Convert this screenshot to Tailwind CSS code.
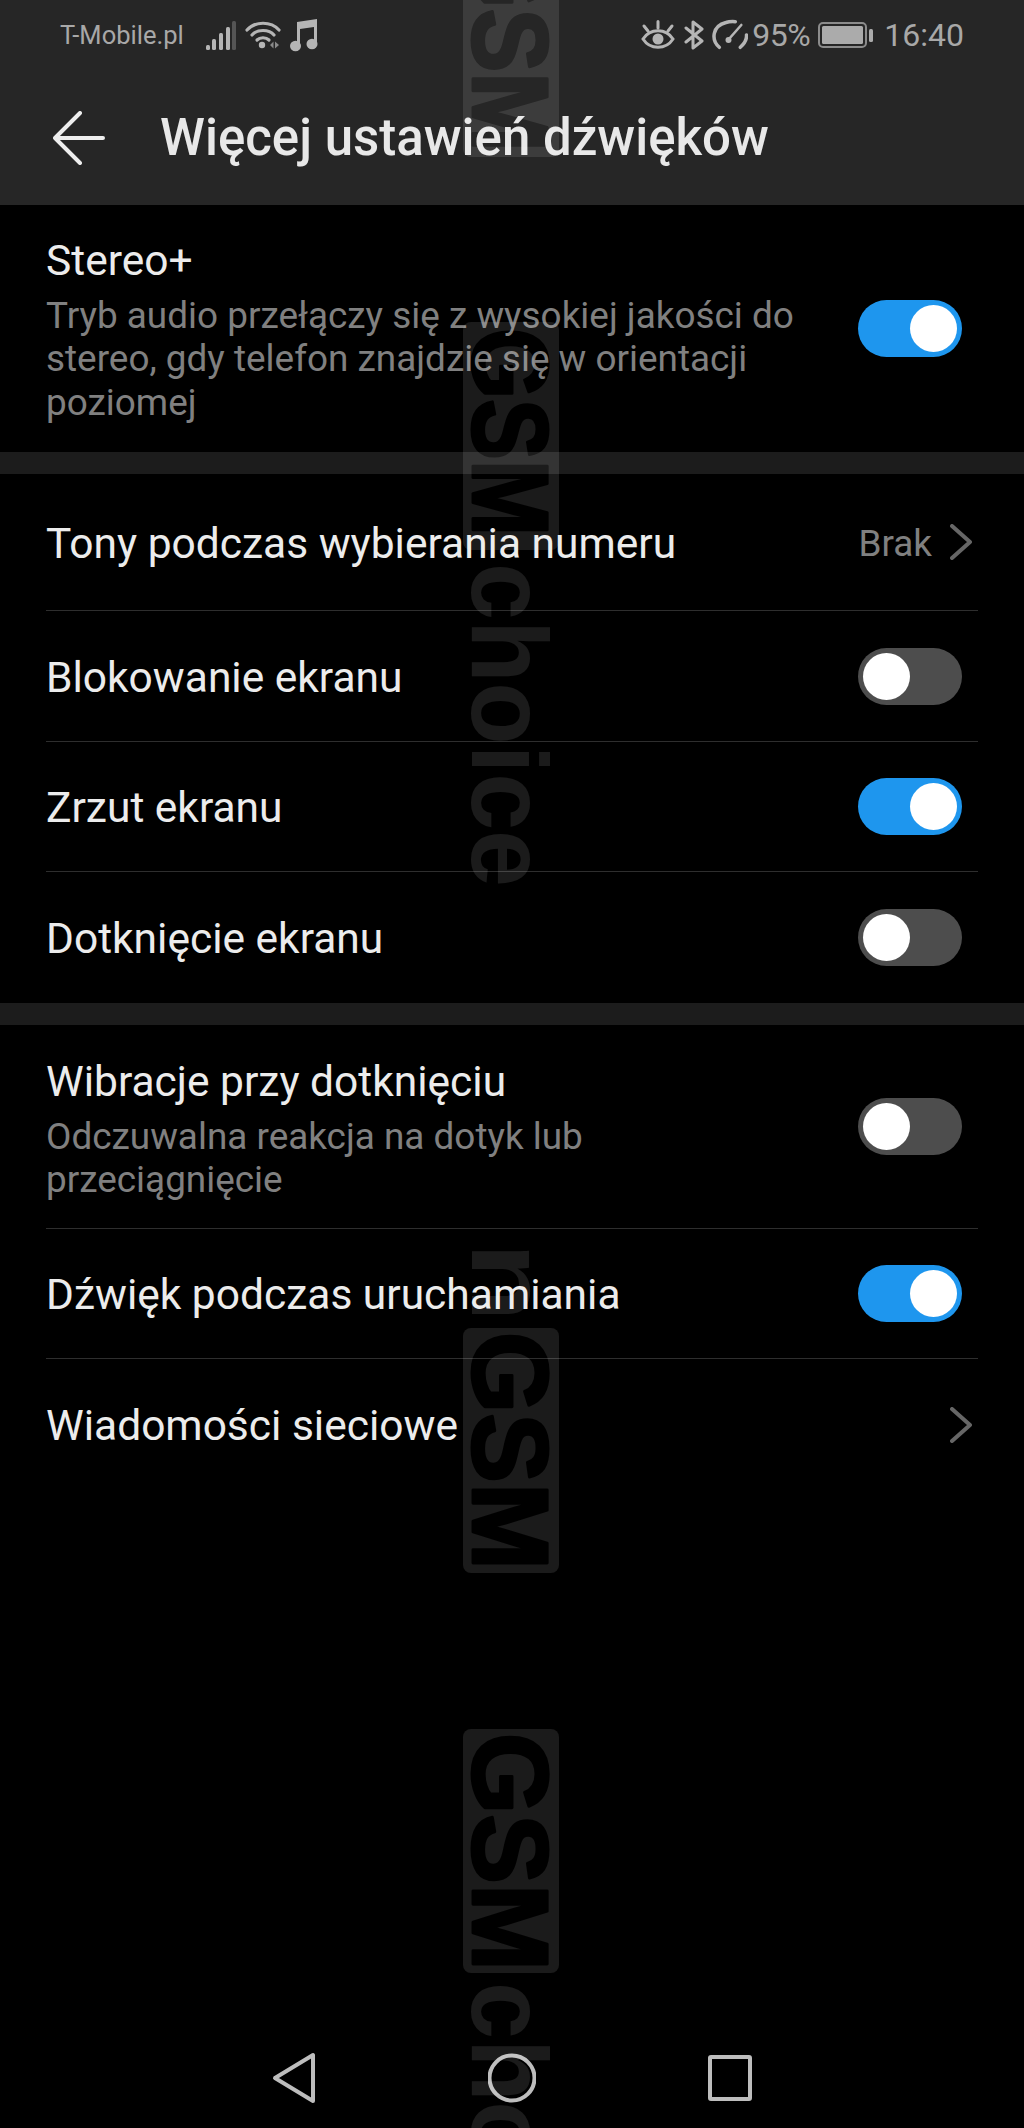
<!DOCTYPE html>
<html lang="pl">
<head>
  <meta charset="UTF-8" />
  <meta name="viewport" content="width=device-width, initial-scale=1.0"/>
  <title>Więcej ustawień dźwięków</title>
  <script src="https://cdn.jsdelivr.net/npm/@tailwindcss/browser@4"></script>
</head>
<body class="relative flex flex-col w-[1024px] h-[2128px] overflow-hidden bg-black font-['Roboto',sans-serif] text-[#ececec]">

  <!-- header -->
  <header class="bg-[#262626] h-[205px] shrink-0">
    <div class="flex items-center h-[70px] pl-[60px] pr-[60px] text-[#a8a8a8]">
      <span class="text-[25.5px] w-[145px]">T-Mobile.pl</span>
      <svg class="w-[32px] h-[32px]" viewBox="0 0 32 32" fill="#b5b5b5">
        <rect x="1" y="26" width="4" height="5" rx="1.5"/><rect x="7" y="20" width="4" height="11" rx="1.5"/><rect x="14" y="14" width="4" height="17" rx="1.5"/><rect x="21" y="8" width="4" height="23" rx="1.5"/><rect x="27" y="2" width="4" height="29" rx="1.5" fill="#555555"/>
      </svg>
      <svg class="w-[36px] h-[30px] ml-[8px]" viewBox="0 0 36 30" fill="none" stroke="#b5b5b5" stroke-width="3.2" stroke-linecap="round">
        <path d="M2 10 C10 1 26 1 34 10"/><path d="M7 15 C12 9 24 9 29 15"/><path d="M12 20 C15 17 21 17 24 20"/>
        <circle cx="17" cy="25" r="3.2" fill="#b5b5b5" stroke="none"/>
        <path d="M25 25 l3.5 -3.5 v7z M30 21.5 l4 3.5 -4 3.5z" fill="#8a8a8a" stroke="none"/>
      </svg>
      <svg class="w-[28px] h-[34px] ml-[9px]" viewBox="0 0 28 34" fill="#b5b5b5">
        <path d="M7 4 L27 1 V27 H24 V9 L10 11 V29 H7z"/><ellipse cx="5.5" cy="28" rx="5.5" ry="5.2"/><ellipse cx="22" cy="26" rx="5.5" ry="5.2"/>
      </svg>
      <div class="flex-1"></div>
      <svg class="w-[34px] h-[30px]" viewBox="0 0 34 30" fill="none" stroke="#b5b5b5" stroke-width="3" stroke-linecap="round">
        <path d="M2 19 C9 8 25 8 32 19 C25 30 9 30 2 19z"/><circle cx="17" cy="19" r="5.5" fill="#b5b5b5" stroke="none"/>
        <path d="M3 6 L7 11 M17 1.5 V8 M31 6 L27 11"/>
      </svg>
      <svg class="w-[20px] h-[30px] ml-[9px]" viewBox="0 0 20 30" fill="none" stroke="#b5b5b5" stroke-width="3" stroke-linecap="round" stroke-linejoin="round">
        <path d="M2 8 L18 21 L9 28 V2 L18 9 L2 22"/>
      </svg>
      <svg class="w-[36px] h-[34px] ml-[8px]" viewBox="0 0 36 34" fill="none" stroke="#b5b5b5" stroke-width="3.5" stroke-linecap="round">
        <path d="M7.3 29.3 C-1 22 0 8 14 4.5 C17 3.5 20 3.5 23.3 3.7"/><path d="M34.5 17 C35 22 32 26 28.3 29.3"/><path d="M17 21 L29.3 7" stroke-width="2.6"/><circle cx="16.5" cy="22" r="3" fill="#b5b5b5" stroke="none"/>
      </svg>
      <span class="text-[32px] ml-[4px] w-[60px] tracking-[-0.5px]">95%</span>
      <svg class="w-[56px] h-[28px] ml-[6px]" viewBox="0 0 56 28" fill="none">
        <rect x="1" y="2" width="47" height="24" rx="4" stroke="#8c8c8c" stroke-width="2"/><rect x="4" y="5" width="41" height="18" rx="1.5" fill="#ababab"/><rect x="51" y="8" width="4" height="13" rx="1.5" fill="#ababab"/>
      </svg>
      <span class="text-[32px] ml-[10px]">16:40</span>
    </div>
    <div class="flex items-center h-[135px] pl-[53px]">
      <svg class="w-[52px] h-[54px]" viewBox="0 0 52 54" fill="none" stroke="#eeeeee" stroke-width="4" stroke-linecap="round" stroke-linejoin="round">
        <path d="M50 27 H2 M27 2 L2 27 L27 52"/>
      </svg>
      <h1 class="ml-[55px] pt-[2px] text-[51px] font-medium text-[#e8e8e8]">Więcej ustawień dźwięków</h1>
    </div>
  </header>

  <!-- stereo -->
  <section class="pl-[46px] pr-[62px] h-[247px] shrink-0 flex items-center justify-between">
    <div class="w-[755px] mt-[3px]">
      <p class="text-[42.5px] leading-[50px] mb-[8px]">Stereo+</p>
      <p class="text-[36.9px] leading-[43.5px] text-[#808080]">Tryb audio przełączy się z wysokiej jakości do stereo, gdy telefon znajdzie się w orientacji poziomej</p>
    </div>
    <div class="flex justify-end items-center w-[104px] h-[57px] rounded-full bg-[#1e96ee] px-[5px]"><div class="w-[47px] h-[47px] rounded-full bg-white"></div></div>
  </section>
  <div class="h-[22px] shrink-0 bg-[#1c1c1c]"></div>

  <!-- tones -->
  <section class="mx-[46px] shrink-0">
    <div class="flex items-center justify-between h-[137px] border-b border-[#2e2e2e]">
      <span class="text-[42.5px] pt-[3px]">Tony podczas wybierania numeru</span>
      <div class="flex items-center pr-[6px]">
        <span class="text-[36.9px] pt-[3px] text-[#808080]">Brak</span>
        <svg class="w-[22px] h-[36px] ml-[18px]" viewBox="0 0 22 36" fill="none" stroke="#666666" stroke-width="4" stroke-linecap="round" stroke-linejoin="round"><path d="M2 2 L20 18 L2 34"/></svg>
      </div>
    </div>
    <div class="flex items-center justify-between h-[131px] border-b border-[#2e2e2e] pr-[16px]">
      <span class="text-[42.5px] pt-[3px]">Blokowanie ekranu</span>
      <div class="flex items-center w-[104px] h-[57px] rounded-full bg-[#4d4d4d] px-[5px]"><div class="w-[47px] h-[47px] rounded-full bg-white"></div></div>
    </div>
    <div class="flex items-center justify-between h-[130px] border-b border-[#2e2e2e] pr-[16px]">
      <span class="text-[42.5px] pt-[3px]">Zrzut ekranu</span>
      <div class="flex justify-end items-center w-[104px] h-[57px] rounded-full bg-[#1e96ee] px-[5px]"><div class="w-[47px] h-[47px] rounded-full bg-white"></div></div>
    </div>
    <div class="flex items-center justify-between h-[131px] pr-[16px]">
      <span class="text-[42.5px] pt-[3px]">Dotknięcie ekranu</span>
      <div class="flex items-center w-[104px] h-[57px] rounded-full bg-[#4d4d4d] px-[5px]"><div class="w-[47px] h-[47px] rounded-full bg-white"></div></div>
    </div>
  </section>
  <div class="h-[22px] shrink-0 bg-[#1c1c1c]"></div>

  <!-- feedback -->
  <section class="mx-[46px] shrink-0">
    <div class="flex items-center justify-between h-[204px] border-b border-[#2e2e2e] pr-[16px]">
      <div class="w-[755px] mt-[5px]">
        <p class="text-[42.5px] leading-[50px] mb-[8px]">Wibracje przy dotknięciu</p>
        <p class="text-[36.9px] leading-[43.5px] text-[#808080]">Odczuwalna reakcja na dotyk lub przeciągnięcie</p>
      </div>
      <div class="flex items-center w-[104px] h-[57px] rounded-full bg-[#4d4d4d] px-[5px]"><div class="w-[47px] h-[47px] rounded-full bg-white"></div></div>
    </div>
    <div class="flex items-center justify-between h-[130px] border-b border-[#2e2e2e] pr-[16px]">
      <span class="text-[42.5px] pt-[3px]">Dźwięk podczas uruchamiania</span>
      <div class="flex justify-end items-center w-[104px] h-[57px] rounded-full bg-[#1e96ee] px-[5px]"><div class="w-[47px] h-[47px] rounded-full bg-white"></div></div>
    </div>
    <div class="flex items-center justify-between h-[131px] pr-[6px]">
      <span class="text-[42.5px] pt-[3px]">Wiadomości sieciowe</span>
      <svg class="w-[22px] h-[36px]" viewBox="0 0 22 36" fill="none" stroke="#666666" stroke-width="4" stroke-linecap="round" stroke-linejoin="round"><path d="M2 2 L20 18 L2 34"/></svg>
    </div>
  </section>

  <!-- nav bar -->
  <nav class="mt-auto mb-[24px] flex justify-center items-center gap-[170px]">
    <svg class="w-[48px] h-[52px]" viewBox="0 0 48 52" fill="none" stroke="#bdbdbd" stroke-width="4" stroke-linejoin="round"><path d="M5 26 L43 3 V49z"/></svg>
    <svg class="w-[48px] h-[52px]" viewBox="0 0 48 52" fill="none" stroke="#bdbdbd" stroke-width="4"><circle cx="24" cy="26" r="22.5"/></svg>
    <svg class="w-[48px] h-[52px]" viewBox="0 0 48 52" fill="none" stroke="#bdbdbd" stroke-width="4" stroke-linejoin="round"><rect x="4" y="5" width="40" height="42" rx="1"/></svg>
  </nav>

  <!-- watermark -->
  <svg class="absolute top-0 left-0 pointer-events-none" width="1024" height="2128" viewBox="0 0 1024 2128" font-family="'Liberation Sans',sans-serif" font-weight="700" font-size="108">
    <mask id="cut" maskUnits="userSpaceOnUse" x="0" y="0" width="1024" height="2128">
      <rect width="1024" height="2128" fill="#fff"/>
      <g fill="#000" stroke="#000" stroke-width="3" stroke-linejoin="round">
        <text transform="translate(473 -66) rotate(90)" textLength="218" lengthAdjust="spacingAndGlyphs">GSM</text>
        <text transform="translate(473 328) rotate(90)" textLength="208" lengthAdjust="spacingAndGlyphs">GSM</text>
        <text transform="translate(473 1332) rotate(90)" textLength="238" lengthAdjust="spacingAndGlyphs">GSM</text>
        <text transform="translate(473 1733) rotate(90)" textLength="238" lengthAdjust="spacingAndGlyphs">GSM</text>
      </g>
    </mask>
    <g fill="#fff" fill-opacity="0.105" mask="url(#cut)">
      <rect x="463" y="-100" width="96" height="257" rx="8"/>
      <rect x="463" y="322" width="96" height="228" rx="8"/>
      <rect x="463" y="1328" width="96" height="245" rx="8"/>
      <rect x="463" y="1729" width="96" height="244" rx="8"/>
    </g>
    <g fill="#fff" fill-opacity="0.105">
      <text transform="translate(472 563) rotate(90)" textLength="324" lengthAdjust="spacingAndGlyphs">choice</text>
      <text transform="translate(472 1242) rotate(90)" textLength="80" lengthAdjust="spacingAndGlyphs">n</text>
      <text transform="translate(472 1982) rotate(90)" textLength="324" lengthAdjust="spacingAndGlyphs">choice</text>
    </g>
  </svg>
</body>
</html>
